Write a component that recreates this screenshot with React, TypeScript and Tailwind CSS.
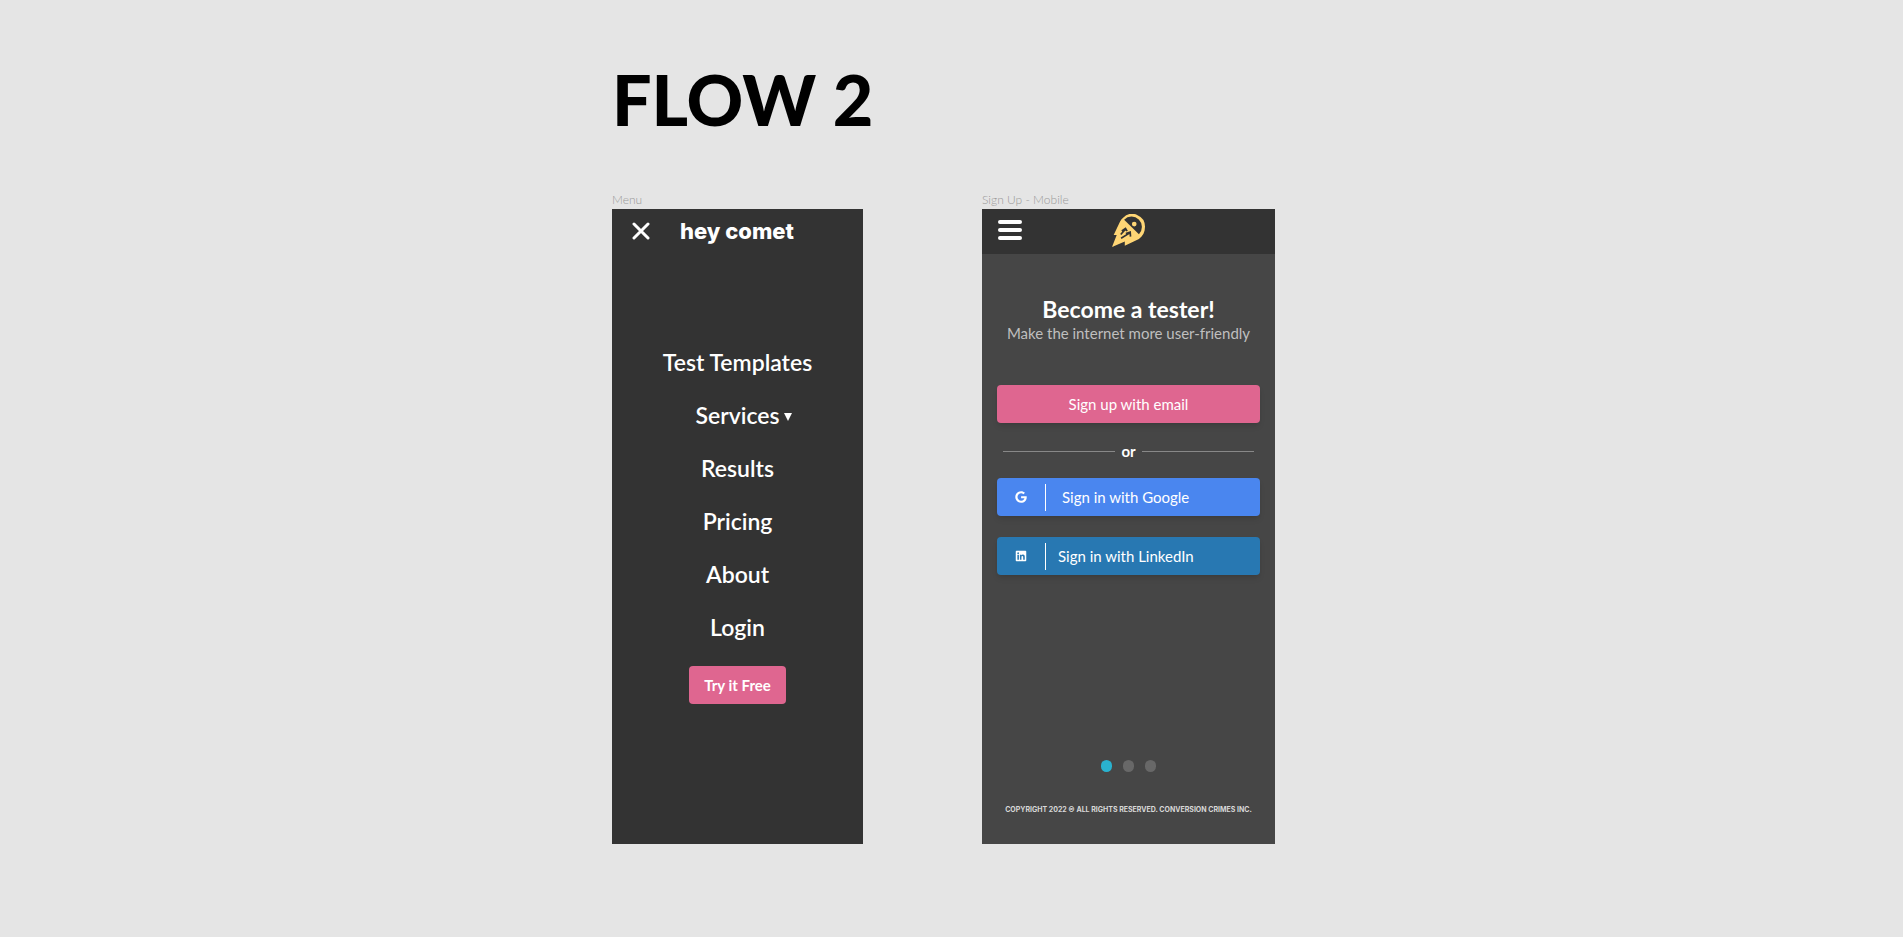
import { FaGoogle, FaLinkedin } from "react-icons/fa";

const menuItems = ["Test Templates", "Services", "Results", "Pricing", "About", "Login"];

function CometLogo() {
  return (
    <svg viewBox="0 0 98 98" className="size-[33px]" role="img" aria-label="Comet">
      <path
        d="M33 11A38 38 0 0 1 98 38C98 54 92 66 80 74L38 94V82L0 98L14 62H5L24 22Q27 16 33 11Z"
        fill="#ffd675"
      />
      <path d="M36 17A29.500 29.500 0 0 1 80 60Z" fill="#333333" />
      <circle cx="66" cy="30" r="7" fill="#ffd675" />
      <path
        d="M29 50L40 43L45 51M40 45L26 61M41 58L54 54L55 67M53 56L27 72"
        fill="none"
        stroke="#333333"
        strokeWidth="5"
      />
    </svg>
  );
}

function MenuScreen() {
  return (
    <section className="flex w-[251px] flex-col">
      <p className="h-[17px] text-xs leading-4 font-light text-[#999999]">Menu</p>
      <div className="flex grow flex-col items-center bg-[#333333] text-white">
        <header className="flex h-[43px] w-full items-center gap-[30px] pl-5">
          <button aria-label="Close menu" type="button">
            <svg viewBox="0 0 18 18" className="size-[18px]" fill="none" stroke="white" strokeWidth="3" strokeLinecap="round">
              <path d="M2 2L16 16M16 2L2 16" />
            </svg>
          </button>
          <span className="font-['Inter',sans-serif] text-[22px] leading-6 font-extrabold">hey comet</span>
        </header>
        <nav className="mt-[84px] flex flex-col items-center">
          {menuItems.map((item) => (
            <a key={item} href="#" className="relative text-[23px] leading-[53px] font-semibold">
              {item}
              {item === "Services" && (
                <svg viewBox="0 0 8 8" className="absolute top-6 -right-3 size-2" fill="white">
                  <path d="M0 0H8L4 8Z" />
                </svg>
              )}
            </a>
          ))}
        </nav>
        <button type="button" className="mt-3 rounded bg-[#df6690] px-[15px] text-[15px] leading-[38px] font-bold">
          Try it Free
        </button>
      </div>
    </section>
  );
}

function SignUpScreen() {
  return (
    <section className="flex w-[293px] flex-col">
      <p className="h-[17px] text-xs leading-4 font-light text-[#999999]">Sign Up - Mobile</p>
      <div className="flex min-h-[635px] grow flex-col bg-[#464646] text-white">
        <header className="grid h-[45px] grid-cols-3 items-center bg-[#333333] px-4 pb-[3px]">
          <button type="button" aria-label="Open menu" className="flex w-6 flex-col gap-1">
            <span className="h-1 rounded-full bg-white" />
            <span className="h-1 rounded-full bg-white" />
            <span className="h-1 rounded-full bg-white" />
          </button>
          <div className="flex justify-center">
            <CometLogo />
          </div>
        </header>
        <div className="mt-[43px] text-center">
          <h2 className="text-[23px] leading-6 font-bold">Become a tester!</h2>
          <p className="text-[15px] leading-6 text-[#bfbfbf]">Make the internet more user-friendly</p>
        </div>
        <div className="mt-10 flex flex-col px-[15px] text-[15px]">
          <button type="button" className="rounded bg-[#df6690] leading-[38px] shadow-md">
            Sign up with email
          </button>
          <div className="flex h-[55px] items-center gap-1.5 px-1.5 pt-0.5 font-bold">
            <span className="h-px grow bg-[#888888]" />
            or
            <span className="h-px grow bg-[#888888]" />
          </div>
          <button type="button" className="flex h-[38px] items-center rounded bg-[#4a86ef] shadow-md">
            <span className="flex w-12 justify-center">
              <FaGoogle className="size-3" />
            </span>
            <span className="mr-4 h-[27px] w-px bg-white" />
            Sign in with Google
          </button>
          <button type="button" className="mt-[21px] flex h-[38px] items-center rounded bg-[#2878b2] shadow-md">
            <span className="flex w-12 justify-center">
              <FaLinkedin className="size-3" />
            </span>
            <span className="mr-3 h-[27px] w-px bg-white" />
            Sign in with LinkedIn
          </button>
        </div>
        <div className="mt-auto flex justify-center gap-[11px]">
          <span className="h-3 w-[11px] rounded-full bg-[#2ab2cf]" />
          <span className="h-3 w-[11px] rounded-full bg-[#686868]" />
          <span className="h-3 w-[11px] rounded-full bg-[#686868]" />
        </div>
        <footer className="mt-8 mb-7 text-center font-['Inter',sans-serif] text-[7px] leading-3 font-bold text-[#d8d8d8]">
          COPYRIGHT 2022 © ALL RIGHTS RESERVED. CONVERSION CRIMES INC.
        </footer>
      </div>
    </section>
  );
}

export default function App() {
  return (
    <main className="flex min-h-screen justify-center bg-[#e5e5e5] pr-4 font-['Lato',sans-serif]">
      <div>
        <h1 className="pt-[57px] text-[70px] leading-[84px] font-black text-black">FLOW 2</h1>
        <div className="mt-[51px] flex gap-[119px]">
          <MenuScreen />
          <SignUpScreen />
        </div>
      </div>
    </main>
  );
}
